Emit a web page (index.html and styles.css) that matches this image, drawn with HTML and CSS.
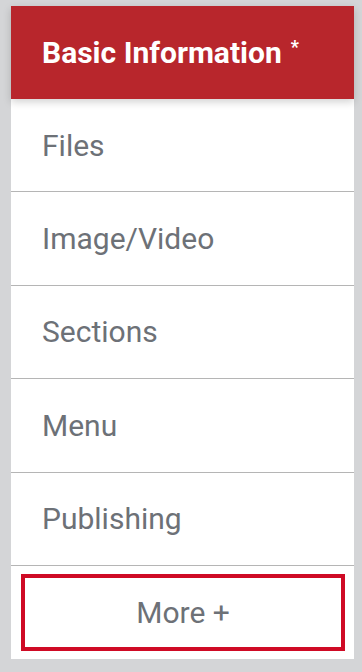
FILE: index.html
```html
<!DOCTYPE html>
<html lang="en">
<head>
<meta charset="utf-8">
<title>Tabs</title>
<link rel="stylesheet" href="styles.css">
</head>
<body>
<nav class="panel">
  <div class="tab tab-active">Basic Information <span class="req">*</span></div>
  <div class="tab">Files</div>
  <div class="tab">Image/Video</div>
  <div class="tab">Sections</div>
  <div class="tab">Menu</div>
  <div class="tab">Publishing</div>
  <div class="more-wrap">
    <button class="more" type="button">More +</button>
  </div>
</nav>
</body>
</html>
```

FILE: styles.css
```css
html, body {
  margin: 0;
  padding: 0;
  background: #d4d5d7;
}
body {
  padding: 6px 8px 14px 11px;
  font-family: Roboto, "Liberation Sans", sans-serif;
}
.panel {
  width: 343px;
  background: #ffffff;
  display: flex;
  flex-direction: column;
}
.tab {
  box-sizing: border-box;
  height: 93.4px;
  display: flex;
  align-items: center;
  padding-left: 31px;
  font-size: 30px;
  color: #6d7177;
  border-bottom: 1px solid #b5b5b5;
}
.tab-active {
  height: 93px;
  background: #b8262c;
  color: #ffffff;
  font-weight: 700;
  border-bottom: none;
  box-shadow: 0 3px 8px rgba(0, 0, 0, 0.18);
  position: relative;
  z-index: 1;
}
.req {
  font-size: 18px;
  margin-left: 9px;
  align-self: center;
  margin-top: -12px;
}
.more-wrap {
  padding: 8px 9px 8px 10px;
}
.more {
  box-sizing: border-box;
  width: 100%;
  height: 77px;
  background: #ffffff;
  border: 4px solid #cf0a25;
  font-family: Roboto, "Liberation Sans", sans-serif;
  font-size: 30px;
  color: #6d7177;
  padding: 0;
  cursor: pointer;
}
```
